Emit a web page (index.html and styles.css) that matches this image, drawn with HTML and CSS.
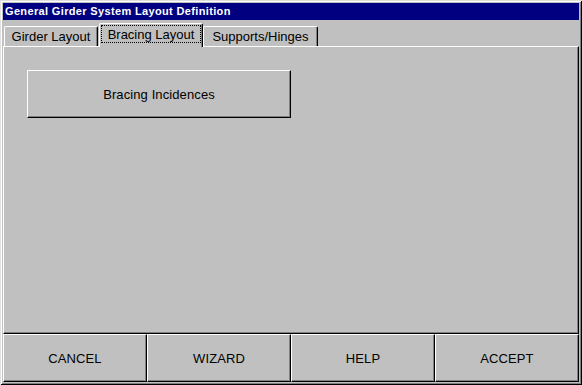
FILE: index.html
```html
<!DOCTYPE html>
<html lang="en">

<head>
    <meta charset="UTF-8">
    <title>General Girder System Layout Definition</title>
    <link rel="stylesheet" href="styles.css">
</head>

<body>
    <div class="window">
        <div class="title-bar">General Girder System Layout Definition</div>

        <div class="tabs">
            <div class="tab tab-girder">Girder Layout</div>
            <div class="tab tab-active tab-bracing"><span class="tab-focus">Bracing Layout</span></div>
            <div class="tab tab-supports">Supports/Hinges</div>
        </div>

        <div class="panel">
            <button class="btn btn-wide">Bracing Incidences</button>
        </div>

        <div class="actions">
            <button class="btn btn-action">CANCEL</button>
            <button class="btn btn-action">WIZARD</button>
            <button class="btn btn-action">HELP</button>
            <button class="btn btn-action">ACCEPT</button>
        </div>
    </div>
</body>

</html>
```

FILE: styles.css
```css
* {
    box-sizing: border-box;
}
body {
    margin: 0;
    background-color: #c0c0c0;
    font-family: "Liberation Sans", Arial, sans-serif;
    color: #000;
}
.window {
    width: 582px;
    height: 385px;
    padding: 3px;
    display: flex;
    flex-direction: column;
    background-color: #c0c0c0;
    /* classic 3d frame: light outer, white inner, dark bottom/right */
    box-shadow: inset 1px 1px #dfdfdf, inset -1px -1px #000,
                inset 2px 2px #fff, inset -2px -2px #808080;
}
.title-bar {
    height: 17px;
    line-height: 17px;
    padding-left: 2px;
    background-color: #000080;
    color: #fff;
    font-weight: bold;
    font-size: 11px;
    letter-spacing: 0.35px;
}
.tabs {
    height: 26px;
    display: flex;
    align-items: flex-end;
    padding-left: 1px;
}
.tab {
    height: 20px;
    display: flex;
    align-items: center;
    justify-content: center;
    font-size: 13px;
    background-color: #c0c0c0;
    border-top: 1px solid #fff;
    border-left: 1px solid #fff;
    border-right: 1px solid #000;
    border-radius: 2px 2px 0 0;
    box-shadow: inset -1px 0 #808080;
}
.tab-girder {
    width: 94px;
}
.tab-bracing {
    width: 104px;
    margin-left: 1px;
}
.tab-supports {
    width: 115px;
}
.tab-active {
    position: relative;
    z-index: 1;
    height: 24px;
    margin-bottom: -1px;
    padding: 1px 1px 4px 1px;
    align-items: stretch;
}
.tab-focus {
    flex: 1;
    display: flex;
    align-items: center;
    justify-content: center;
    border: 1px dotted #000;
}
.panel {
    flex: 1;
    padding: 23px;
    border: 1px solid;
    border-color: #fff #000 #000 #fff;
    box-shadow: inset -1px -1px #808080;
}
.btn {
    padding: 0;
    font-family: "Liberation Sans", Arial, sans-serif;
    font-size: 13px;
    letter-spacing: 0.1px;
    color: #000;
    background-color: #c0c0c0;
    border: 1px solid;
    border-color: #fff #000 #000 #fff;
    box-shadow: inset -1px -1px #808080;
}
.btn-wide {
    display: block;
    width: 264px;
    height: 48px;
}
.actions {
    height: 48px;
    display: flex;
}
.btn-action {
    width: 144px;
    height: 48px;
}
```
